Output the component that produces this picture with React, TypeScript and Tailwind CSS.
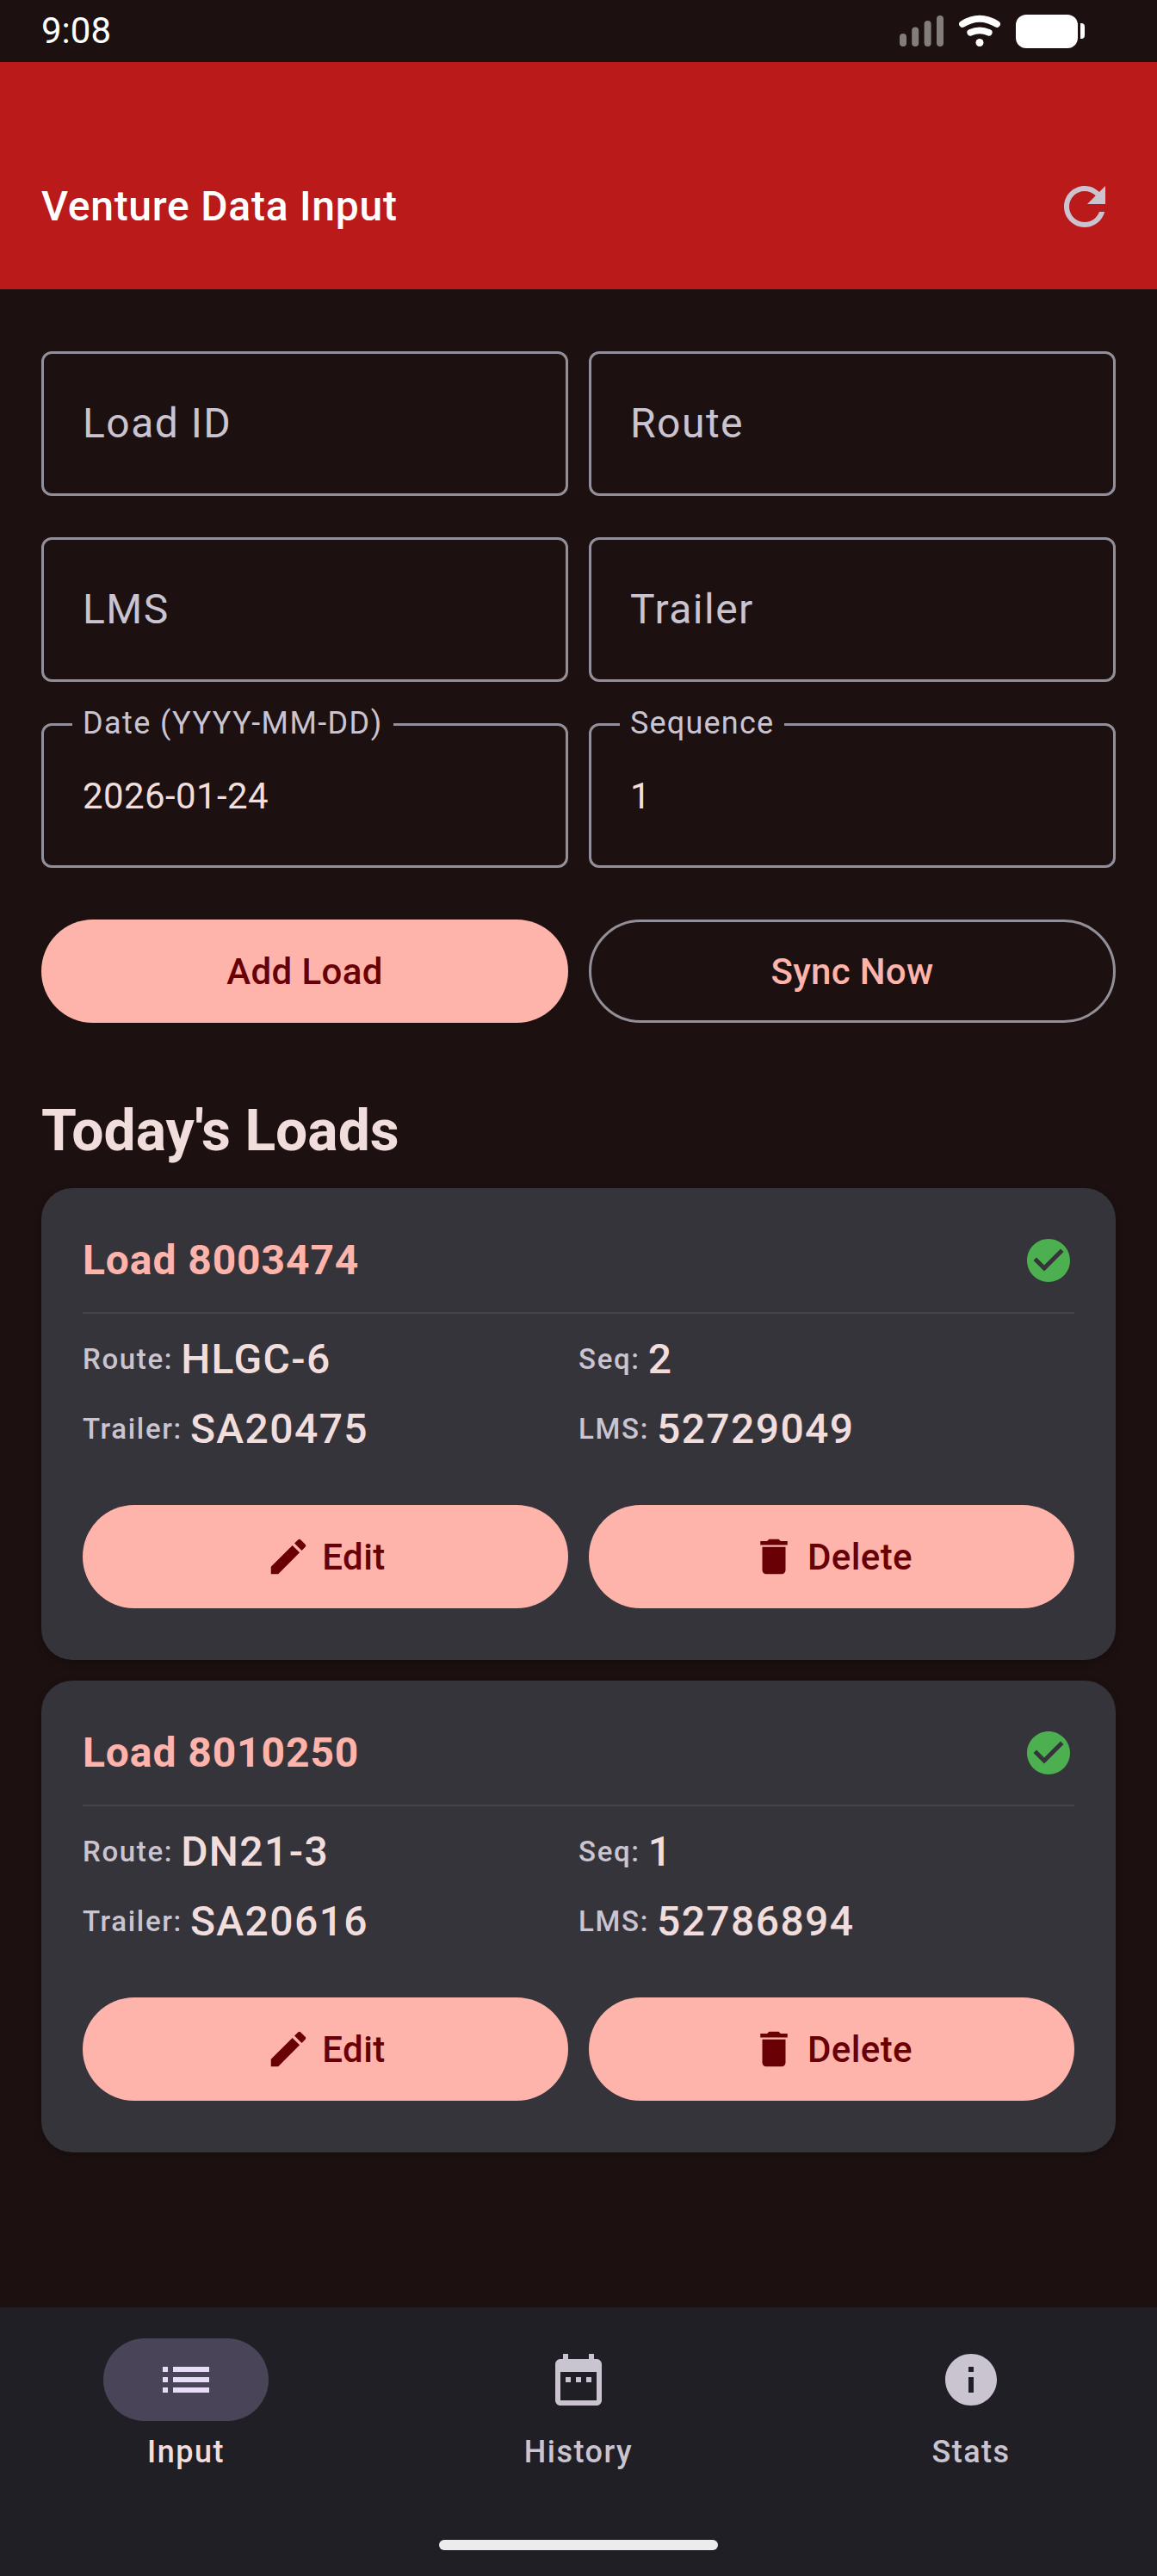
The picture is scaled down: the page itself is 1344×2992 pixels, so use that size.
import type { ReactNode } from "react";

const icons = {
  refresh:
    "M17.65 6.35C16.2 4.9 14.21 4 12 4c-4.42 0-7.99 3.58-7.99 8s3.57 8 7.99 8c3.73 0 6.84-2.55 7.73-6h-2.08c-.82 2.33-3.04 4-5.65 4-3.31 0-6-2.69-6-6s2.69-6 6-6c1.66 0 3.14.69 4.22 1.78L13 11h7V4l-2.35 2.35z",
  check:
    "M12 2C6.48 2 2 6.48 2 12s4.48 10 10 10 10-4.48 10-10S17.52 2 12 2zM10 17l-5-5 1.41-1.41L10 14.17l7.59-7.59L19 8l-9 9z",
  edit: "M3 17.25V21h3.75L17.81 9.94l-3.75-3.75L3 17.25zM20.71 7.04c.39-.39.39-1.02 0-1.41l-2.34-2.34c-.39-.39-1.02-.39-1.41 0l-1.83 1.83 3.75 3.75 1.83-1.83z",
  trash: "M6 19c0 1.1.9 2 2 2h8c1.1 0 2-.9 2-2V7H6v12zM19 4h-3.5l-1-1h-5l-1 1H5v2h14V4z",
  list: "M3 13h2v-2H3v2zm0 4h2v-2H3v2zm0-8h2V7H3v2zm4 4h14v-2H7v2zm0 4h14v-2H7v2zM7 7v2h14V7H7z",
  calendar:
    "M9 11H7v2h2v-2zm4 0h-2v2h2v-2zm4 0h-2v2h2v-2zm2-7h-1V2h-2v2H8V2H6v2H5c-1.11 0-1.99.9-1.99 2L3 20c0 1.1.89 2 2 2h14c1.1 0 2-.9 2-2V6c0-1.1-.9-2-2-2zm0 16H5V9h14v11z",
  info: "M12 2C6.48 2 2 6.48 2 12s4.48 10 10 10 10-4.48 10-10S17.52 2 12 2zm1 15h-2v-6h2v6zm0-8h-2V7h2v2z",
};

function Icon({ name, className }: { name: keyof typeof icons; className: string }) {
  return (
    <svg viewBox="0 0 24 24" fill="currentColor" className={className}>
      <path d={icons[name]} />
    </svg>
  );
}

function StatusBar() {
  return (
    <div className="flex h-[72px] items-center justify-between bg-[#1c1110] pl-12 pr-[84px] text-white">
      <span className="text-[42px] leading-none">9:08</span>
      <div className="flex items-center">
        <svg viewBox="0 0 52 40" className="h-10 w-[52px] fill-white/45">
          <rect x="1" y="23" width="8" height="15" rx="4" />
          <rect x="15.2" y="15.5" width="8" height="22.5" rx="4" />
          <rect x="29.6" y="8" width="8" height="30" rx="4" />
          <rect x="44" y="2" width="8" height="36" rx="4" />
        </svg>
        <svg viewBox="0 0 48 40" className="ml-[18px] h-10 w-12" fill="none" stroke="#fff" strokeWidth="7.8" strokeLinecap="round">
          <path d="M4 12Q24 -0.4 44 12" />
          <path d="M13.3 21.8Q24 16.8 34.7 21.8" />
          <circle cx="24" cy="33.5" r="4.5" fill="#fff" stroke="none" />
        </svg>
        <div className="ml-[18px] h-[39px] w-[72px] rounded-[12px] bg-white" />
        <div className="ml-[3px] h-[18px] w-[5px] rounded-r-[4px] bg-white" />
      </div>
    </div>
  );
}

function Field({
  label,
  value,
  tracking = "tracking-[1.2px]",
}: {
  label: string;
  value?: string;
  tracking?: string;
}) {
  if (value === undefined) {
    return (
      <div className="flex h-[168px] items-center rounded-[12px] border-[3px] border-[#938f99] pl-[45px] text-[48px] tracking-[1.5px] text-[#cac4d0]">
        {label}
      </div>
    );
  }
  return (
    <div className="relative flex h-[168px] items-center rounded-[12px] border-[3px] border-[#938f99] pl-[45px] text-[42px] tracking-[0.4px] text-[#f1dedc]">
      <span
        className={`absolute -top-[27px] left-[33px] bg-[#1c1110] px-3 text-[36px] leading-[48px] text-[#cac4d0] ${tracking}`}
      >
        {label}
      </span>
      {value}
    </div>
  );
}

function FilledButton({ children }: { children: ReactNode }) {
  return (
    <button className="flex h-[120px] items-center justify-center gap-3 rounded-full bg-[#ffb4ab] text-[42px] font-medium tracking-[0.4px] text-[#690005]">
      {children}
    </button>
  );
}

function Detail({ label, value }: { label: string; value: string }) {
  return (
    <div className="flex h-[57px] items-center gap-[9px] font-medium">
      <span className="text-[33px] leading-none tracking-[1.65px] text-[#cac4d0]">{label}:</span>
      <span className="text-[48px] leading-none tracking-[1.4px] text-[#f1dedc]">{value}</span>
    </div>
  );
}

type Load = { id: string; route: string; seq: string; trailer: string; lms: string };

const loads: Load[] = [
  { id: "8003474", route: "HLGC-6", seq: "2", trailer: "SA20475", lms: "52729049" },
  { id: "8010250", route: "DN21-3", seq: "1", trailer: "SA20616", lms: "52786894" },
];

function LoadCard({ load }: { load: Load }) {
  return (
    <article className="h-[548px] rounded-[36px] bg-[#36343b] px-12 pt-12 shadow-[0_3px_9px_rgba(0,0,0,0.3)]">
      <div className="flex h-[72px] items-center justify-between">
        <h3 className="text-[48px] font-bold leading-none tracking-[0.9px] text-[#ffb4ab]">Load {load.id}</h3>
        <Icon name="check" className="size-[60px] text-[#4caf50]" />
      </div>
      <div className="mt-6 h-[2px] bg-[#45434b]" />
      <div className="mt-6 grid grid-cols-2 gap-y-6">
        <Detail label="Route" value={load.route} />
        <Detail label="Seq" value={load.seq} />
        <Detail label="Trailer" value={load.trailer} />
        <Detail label="LMS" value={load.lms} />
      </div>
      <div className="mt-[60px] grid grid-cols-2 gap-6">
        <FilledButton>
          <Icon name="edit" className="size-[54px]" />
          Edit
        </FilledButton>
        <FilledButton>
          <Icon name="trash" className="size-[54px]" />
          Delete
        </FilledButton>
      </div>
    </article>
  );
}

function NavItem({ icon, label, active }: { icon: keyof typeof icons; label: string; active?: boolean }) {
  return (
    <button
      className={
        active
          ? "flex flex-1 flex-col items-center text-[#f1dedc]"
          : "flex flex-1 flex-col items-center text-[#cac4d0]"
      }
    >
      <span
        className={
          active
            ? "flex h-24 w-48 items-center justify-center rounded-full bg-[#4a4458] text-[#e8def8]"
            : "flex h-24 w-48 items-center justify-center"
        }
      >
        <Icon name={icon} className="size-[72px]" />
      </span>
      <span className="mt-3 text-[36px] font-medium leading-[48px] tracking-[1.5px]">{label}</span>
    </button>
  );
}

export default function App() {
  return (
    <div className="flex h-[2992px] w-[1344px] flex-col bg-[#1c1110] font-['Roboto',sans-serif]">
      <StatusBar />
      <header className="flex h-[264px] items-center justify-between bg-[#ba1a1a] px-12 pt-[72px]">
        <h1 className="text-[48px] font-medium leading-none tracking-[0.75px] text-white">Venture Data Input</h1>
        <Icon name="refresh" className="size-[72px] text-[#cac4d0]" />
      </header>

      <main className="flex flex-1 flex-col px-12 pt-[72px]">
        <div className="grid grid-cols-2 gap-x-6 gap-y-12">
          <Field label="Load ID" />
          <Field label="Route" />
          <Field label="LMS" />
          <Field label="Trailer" />
          <Field label="Date (YYYY-MM-DD)" value="2026-01-24" tracking="tracking-[1.4px]" />
          <Field label="Sequence" value="1" />
        </div>

        <div className="mt-[60px] grid grid-cols-2 gap-6">
          <FilledButton>Add Load</FilledButton>
          <button className="h-[120px] rounded-full border-[3px] border-[#938f99] text-[42px] font-medium tracking-[0.3px] text-[#ffb4ab]">
            Sync Now
          </button>
        </div>

        <h2 className="mt-[84px] text-[66px] font-bold leading-[84px] text-[#f1dedc]">Today's Loads</h2>
        <div className="mt-6 flex flex-col gap-6">
          {loads.map((load) => (
            <LoadCard key={load.id} load={load} />
          ))}
        </div>
      </main>

      <nav className="flex h-[312px] flex-col items-center bg-[#211f26] pt-9">
        <div className="flex w-full gap-6">
          <NavItem icon="list" label="Input" active />
          <NavItem icon="calendar" label="History" />
          <NavItem icon="info" label="Stats" />
        </div>
        <div className="mt-[78px] h-3 w-[324px] rounded-full bg-[#ececec]" />
      </nav>
    </div>
  );
}
